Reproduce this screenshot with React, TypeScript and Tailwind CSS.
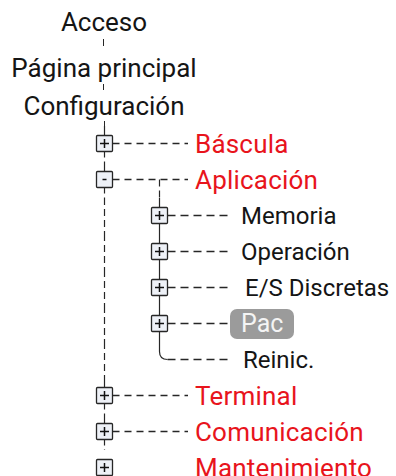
import React from "react";

const STROKE = "#262626";
const RED = "#e8141c";

function Box({ cx, cy, sign }: { cx: number; cy: number; sign: "+" | "-" }) {
  return (
    <g>
      <rect x={cx - 8} y={cy - 8} width={16} height={16} fill="#eef1f7" stroke={STROKE} strokeWidth={1.3} rx={1} />
      {sign === "+" ? (
        <>
          <line x1={cx - 4.5} y1={cy} x2={cx + 4.5} y2={cy} stroke="#111" strokeWidth={1.5} />
          <line x1={cx} y1={cy - 4.5} x2={cx} y2={cy + 4.5} stroke="#111" strokeWidth={1.5} />
        </>
      ) : (
        <line x1={cx - 2} y1={cy} x2={cx + 2} y2={cy} stroke="#111" strokeWidth={1.5} />
      )}
    </g>
  );
}

const MX = 104.5;
const SX = 159.5;
const CY = 17.5;

function HDash({ x1, x2, dash = "7 5" }: { x1: number; x2: number; dash?: string }) {
  return <line x1={x1} y1={CY} x2={x2} y2={CY} stroke={STROKE} strokeWidth={1.3} strokeDasharray={dash} />;
}

function MainRow({
  label,
  sign = "+",
  above = true,
  below = true,
  dashes = true,
  sub = false,
}: {
  label: string;
  sign?: "+" | "-";
  above?: boolean;
  below?: boolean;
  dashes?: boolean;
  sub?: boolean;
}) {
  return (
    <div className="flex h-[36px] items-center">
      <svg width={195} height={36} className="shrink-0">
        {above && <line x1={MX} y1={0} x2={MX} y2={CY - 8} stroke={STROKE} strokeWidth={1.2} />}
        {below && <line x1={MX} y1={CY + 8} x2={MX} y2={36} stroke={STROKE} strokeWidth={1.2} strokeDasharray="6 4" />}
        {dashes && <HDash x1={MX + 8} x2={188} />}
        {sub && <line x1={SX} y1={CY} x2={SX} y2={36} stroke={STROKE} strokeWidth={1.2} strokeDasharray="7 4" />}
        <Box cx={MX} cy={CY} sign={sign} />
      </svg>
      <span className="whitespace-nowrap text-[26px] leading-[30px] tracking-[0.2px]" style={{ color: RED }}>
        {label}
      </span>
    </div>
  );
}

function SubRow({ label, pill = false, textPad = 0 }: { label: string; pill?: boolean; textPad?: number }) {
  return (
    <div className="flex h-[36px] items-center">
      <svg width={pill ? 230 : 241} height={36} className="shrink-0">
        <line x1={MX} y1={0} x2={MX} y2={36} stroke={STROKE} strokeWidth={1.2} strokeDasharray="7 4" />
        <line x1={SX} y1={0} x2={SX} y2={CY - 8} stroke={STROKE} strokeWidth={1.2} />
        <line x1={SX} y1={CY + 8} x2={SX} y2={36} stroke={STROKE} strokeWidth={1.2} />
        <HDash x1={SX + 8} x2={pill ? 230 : 229} dash="8 5" />
        <Box cx={SX} cy={CY} sign="+" />
      </svg>
      {pill ? (
        <span className="rounded-[7px] bg-[#9b9b9b] px-[11px] text-[25px] leading-[30px] text-[#f4f4f4]">{label}</span>
      ) : (
        <span className={`whitespace-nowrap text-[24px] leading-[30px] text-[#151515] ${textPad ? "pl-[4px]" : ""}`}>
          {label}
        </span>
      )}
    </div>
  );
}

function ReinicRow() {
  return (
    <div className="flex h-[36px] items-center">
      <svg width={243} height={36} className="shrink-0">
        <line x1={MX} y1={0} x2={MX} y2={36} stroke={STROKE} strokeWidth={1.2} strokeDasharray="7 4" />
        <path d={`M ${SX} 0 L ${SX} ${CY - 8} Q ${SX} ${CY} ${SX + 8} ${CY}`} fill="none" stroke={STROKE} strokeWidth={1.2} />
        <HDash x1={SX + 8} x2={229} dash="8 5" />
      </svg>
      <span className="text-[24px] leading-[30px] text-[#151515]">Reinic.</span>
    </div>
  );
}

function HeaderDash({ h, top, len }: { h: number; top: number; len: number }) {
  return (
    <div className="w-[208px]" style={{ height: h }}>
      <div className="ml-[103px] w-px bg-[#262626]" style={{ marginTop: top, height: len }} />
    </div>
  );
}

export default function App() {
  return (
    <div
      className="h-[476px] w-[396px] overflow-hidden bg-white text-[#151515]"
      style={{ fontFamily: "Roboto, 'Liberation Sans', sans-serif" }}
    >
      <div className="flex w-[208px] flex-col items-center pt-[7px]">
        <div className="text-[26px] leading-[30px]">Acceso</div>
        <HeaderDash h={16} top={2} len={7} />
        <div className="whitespace-nowrap text-[26px] leading-[30px]">Página principal</div>
        <HeaderDash h={8} top={1} len={6} />
        <div className="text-[26px] leading-[30px]">Configuración</div>
      </div>
      <div className="h-[5px] w-[208px]">
        <div className="ml-[104px] h-[5px] w-px bg-[#262626]" />
      </div>
      <MainRow label="Báscula" />
      <MainRow label="Aplicación" sign="-" sub />
      <SubRow label="Memoria" />
      <SubRow label="Operación" />
      <SubRow label="E/S Discretas" textPad={4} />
      <SubRow label="Pac" pill />
      <ReinicRow />
      <MainRow label="Terminal" />
      <MainRow label="Comunicación" />
      <MainRow label="Mantenimiento" above={false} below={false} dashes={false} />
    </div>
  );
}
